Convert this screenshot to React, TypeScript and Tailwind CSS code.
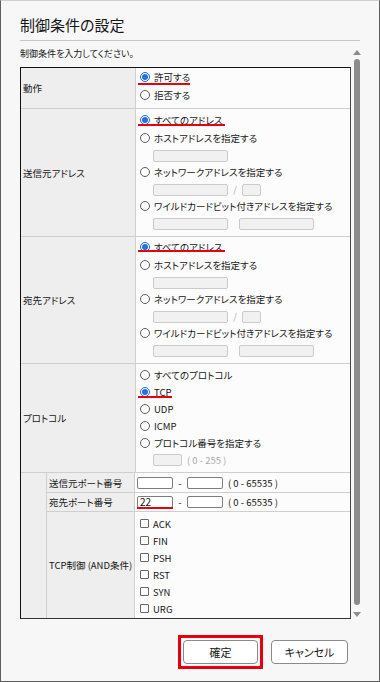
import React from "react";

const font = "font-['Noto_Sans_CJK_JP',sans-serif] [font-feature-settings:'palt']";

function Radio({ checked }: { checked?: boolean }) {
  if (checked) {
    return (
      <span className="w-[10px] h-[10px] shrink-0 rounded-full border border-[#1f66c9] bg-white flex items-center justify-center">
        <span className="w-[6px] h-[6px] rounded-full bg-[#2173dd]" />
      </span>
    );
  }
  return <span className="w-[10px] h-[10px] shrink-0 rounded-full border border-[#5c5c5c] bg-white" />;
}

function Option({
  label,
  checked,
  mark,
  h = "h-[18px]",
}: {
  label: string;
  checked?: boolean;
  mark?: string;
  h?: string;
}) {
  return (
    <div className={`relative ${h} flex items-center pl-[4px] gap-[4px] whitespace-nowrap`}>
      <Radio checked={checked} />
      <span>{label}</span>
      {mark && <span className={`absolute left-[2px] h-[2px] bg-[#e4000f] ${mark}`} />}
    </div>
  );
}

function Box({ w }: { w: string }) {
  return <span className={`${w} h-[12px] rounded-[2px] border border-[#cbcbcb] bg-[#f1f1f1]`} />;
}

function InputLine({ children }: { children: React.ReactNode }) {
  return <div className="h-[16px] pt-[3px] pl-[17px] flex items-start">{children}</div>;
}

function Check({ label }: { label: string }) {
  return (
    <div className="h-[17px] flex items-center pl-[5px] gap-[4px]">
      <span className="w-[9px] h-[9px] border border-[#666] rounded-[1px] bg-white" />
      <span>{label}</span>
    </div>
  );
}

function AddressOptions({ first, pt }: { first: string; pt: string }) {
  return (
    <div className={`flex flex-col ${pt}`}>
      <Option label="すべてのアドレス" checked mark={first} />
      <Option label="ホストアドレスを指定する" />
      <InputLine>
        <Box w="w-[75px]" />
      </InputLine>
      <Option label="ネットワークアドレスを指定する" />
      <InputLine>
        <Box w="w-[75px]" />
        <span className="w-[14px] text-center text-[9px] leading-[12px] text-[#aaa]">/</span>
        <Box w="w-[19px]" />
      </InputLine>
      <Option label="ワイルドカードビット付きアドレスを指定する" />
      <InputLine>
        <Box w="w-[75px]" />
        <span className="w-[11px]" />
        <Box w="w-[75px]" />
      </InputLine>
    </div>
  );
}

function Row({ label, h, children }: { label: string; h: string; children: React.ReactNode }) {
  return (
    <div className={`flex ${h} border-b border-[#cfcfcf]`}>
      <div className="w-[115px] bg-[#eeeeee] border-r border-[#cfcfcf] flex items-center pl-[2px]">{label}</div>
      <div className="flex-1">{children}</div>
    </div>
  );
}

function SubRow({ label, h, last, children }: { label: string; h: string; last?: boolean; children: React.ReactNode }) {
  return (
    <div className={`flex ${h} ${last ? "" : "border-b border-[#cfcfcf]"}`}>
      <div className="w-[88px] bg-[#eeeeee] border-r border-[#cfcfcf] flex items-center pl-[2px] whitespace-nowrap">
        {label}
      </div>
      <div className="flex-1">{children}</div>
    </div>
  );
}

function PortInput({ value, mark }: { value?: string; mark?: boolean }) {
  return (
    <span className="relative w-[36px] h-[12px] rounded-[2px] border border-[#7d7d7d] bg-white text-[10px] leading-[10px] pl-[2px]">
      {value}
      {mark && <span className="absolute left-[-1px] bottom-[-2px] w-[36px] h-[2px] bg-[#e4000f]" />}
    </span>
  );
}

function PortLine({ value, mark }: { value?: string; mark?: boolean }) {
  return (
    <div className="h-full flex items-center pl-[2px]">
      <PortInput value={value} mark={mark} />
      <span className="w-[14px] text-center">-</span>
      <PortInput />
      <span className="ml-[5px]">( 0 - 65535 )</span>
    </div>
  );
}

export default function App() {
  return (
    <div className={`w-[380px] h-[682px] border border-[#5e5e5e] border-t-[#cfcfcf] bg-[#f7f7f7] text-[#161616] ${font} flex flex-col`}>
      <div className="mt-[14px] ml-[19px] h-[20px] text-[15px] leading-[20px]">制御条件の設定</div>
      <div className="mt-[5px] ml-[19px] w-[340px] h-px bg-[#c6c6c6]" />

      <div className="mt-[6px] ml-[19px] h-[575px] flex">
        <div className="w-[331px] flex flex-col text-[9.5px]">
          <div className="h-[13px] text-[9px] leading-[13px]">制御条件を入力してください。</div>
          <div className="mt-[7px] border border-[#111] border-r-[#444] border-b-[#333] bg-[#fcfcfc] leading-[14px]">
            <Row label="動作" h="h-[41px]">
              <Option label="許可する" checked mark="top-[15px] w-[52px]" />
              <Option label="拒否する" />
            </Row>
            <Row label="送信元アドレス" h="h-[128px]">
              <AddressOptions first="top-[13px] w-[87px]" pt="pt-[2px]" />
            </Row>
            <Row label="宛先アドレス" h="h-[127px]">
              <AddressOptions first="top-[12px] w-[87px]" pt="pt-[1px]" />
            </Row>
            <Row label="プロトコル" h="h-[109px]">
              <div className="flex flex-col pt-[2px]">
                <Option label="すべてのプロトコル" h="h-[17px]" />
                <Option label="TCP" checked h="h-[17px]" mark="top-[13px] w-[34px]" />
                <Option label="UDP" h="h-[17px]" />
                <Option label="ICMP" h="h-[17px]" />
                <Option label="プロトコル番号を指定する" h="h-[17px]" />
                <InputLine>
                  <Box w="w-[29px]" />
                  <span className="ml-[5px] leading-[12px] text-[#aaa]">( 0 - 255 )</span>
                </InputLine>
              </div>
            </Row>
            <div className="flex h-[145px]">
              <div className="w-[26px] bg-[#eeeeee] border-r border-[#cfcfcf]" />
              <div className="flex-1 flex flex-col">
                <SubRow label="送信元ポート番号" h="h-[20px]">
                  <PortLine />
                </SubRow>
                <SubRow label="宛先ポート番号" h="h-[19px]">
                  <PortLine value="22" mark />
                </SubRow>
                <SubRow label="TCP制御 (AND条件)" h="h-[106px]" last>
                  <div className="flex flex-col pt-[3px]">
                    {["ACK", "FIN", "PSH", "RST", "SYN", "URG"].map((f) => (
                      <Check key={f} label={f} />
                    ))}
                  </div>
                </SubRow>
              </div>
            </div>
          </div>
        </div>

        <div className="w-[11px] flex flex-col items-center pt-[3px]">
          <span className="w-0 h-0 border-l-[4px] border-r-[4px] border-b-[5px] border-l-transparent border-r-transparent border-b-[#8c8c8c]" />
          <span className="mt-[4px] w-[6px] h-[546px] rounded-full bg-[#8c8c8c]" />
          <span className="mt-[7px] w-0 h-0 border-l-[4px] border-r-[4px] border-t-[5px] border-l-transparent border-r-transparent border-t-[#8c8c8c]" />
        </div>
      </div>

      <div className="mt-[13px] flex justify-end items-center gap-2 pr-[31px] text-[11px]">
        <div className="border-[3px] border-[#e4000f] p-[2px]">
          <button className="w-[75px] h-[24px] rounded-[4px] border border-[#8a8a8a] bg-white">確定</button>
        </div>
        <button className="w-[77px] h-[24px] rounded-[4px] border border-[#8a8a8a] bg-white">キャンセル</button>
      </div>
    </div>
  );
}
